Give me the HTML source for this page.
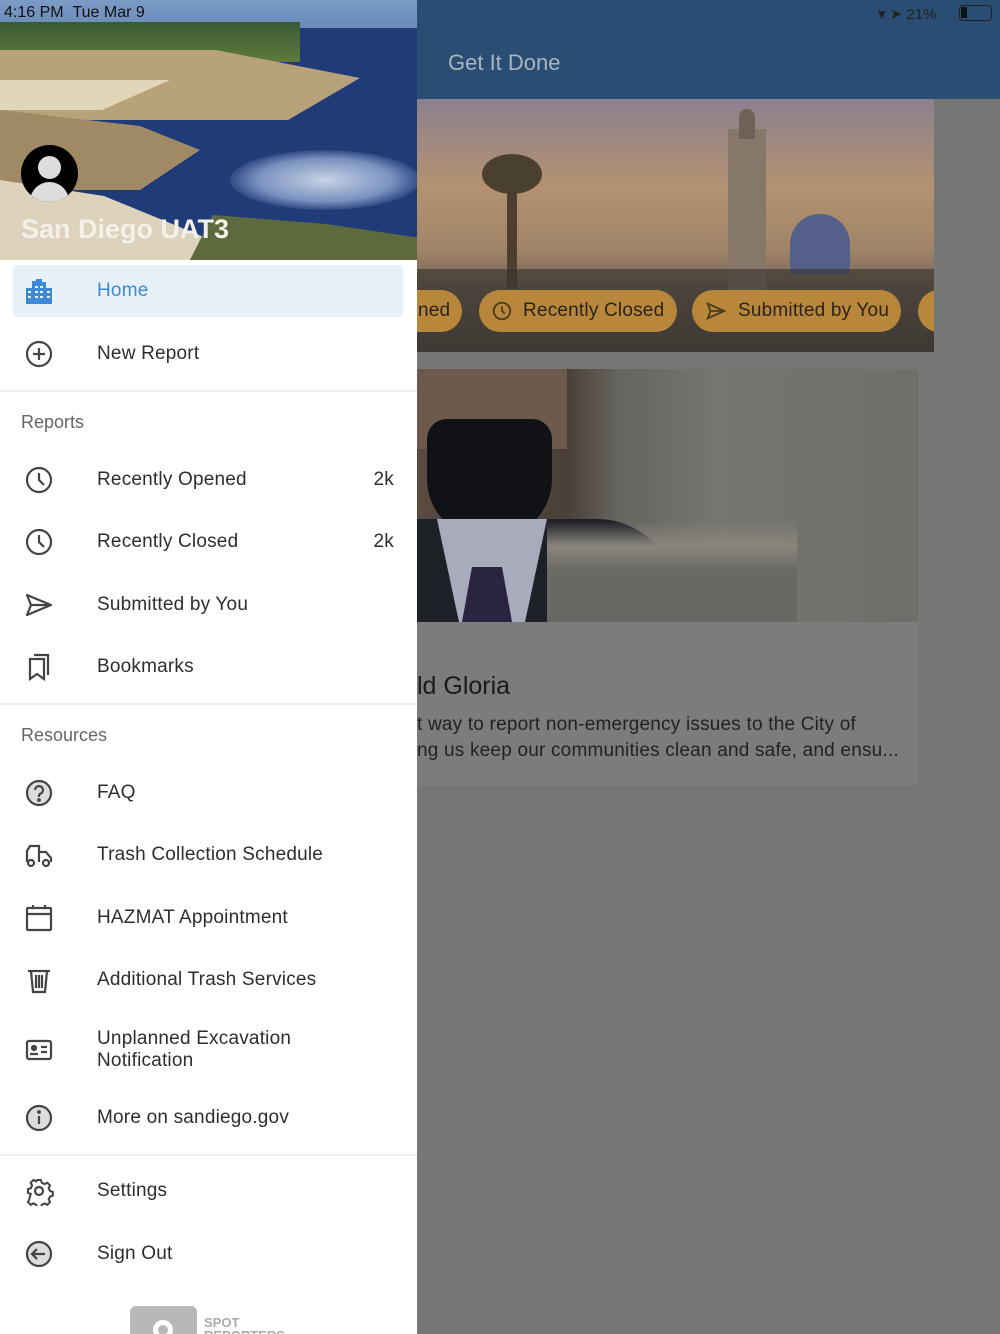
<!DOCTYPE html>
<html style="width:1000px;height:1334px;overflow:hidden"><head><meta charset="utf-8">
<style>
*{margin:0;padding:0;box-sizing:border-box}
body{width:1000px;height:1334px;overflow:hidden;font-family:"Liberation Sans",sans-serif;background:#767676;position:relative}
.abs{position:absolute}
.drawer{left:0;top:0;width:417px;height:1334px;background:#fff}
.item{position:absolute;left:0;width:417px;height:62px;display:flex;align-items:center;font-size:19px;color:#2e2e2e;letter-spacing:.2px}
.item svg{position:absolute;left:24px;width:30px;height:30px}
.item span{position:absolute;left:97px}
.item .n{left:auto;right:23px}
.sec{position:absolute;left:21px;font-size:18px;color:#666}
.div{position:absolute;left:0;width:417px;height:2px;background:#eee}
.chip{position:absolute;top:191px;height:42px;border-radius:21px;background:#b8873c;color:#2a2418;font-size:19px;display:flex;align-items:center;letter-spacing:.2px}
</style></head><body>
<!-- right side (dimmed) -->
<div class="abs" style="left:417px;top:0;width:583px;height:99px;background:#2a4e73"></div>
<div class="abs" style="left:448px;top:50px;font-size:22px;color:#a9b3be">Get It Done</div>
<div class="abs" style="left:878px;top:5px;font-size:15px;color:#222">▾ ➤ 21%</div>
<div class="abs" style="left:959px;top:5px;width:33px;height:16px;border:1.5px solid #222;border-radius:4px"><div style="width:6px;height:11px;background:#111;margin:1px"></div></div>
<div class="abs" style="left:417px;top:99px;width:517px;height:253px;overflow:hidden;background:linear-gradient(180deg,#8c8090 0,#b49270 35%,#a08468 60%,#6a5f52 75%,#4a4440 100%)">
 <div class="abs" style="left:311px;top:30px;width:38px;height:180px;background:#857868"></div>
 <div class="abs" style="left:322px;top:10px;width:16px;height:30px;border-radius:8px 8px 0 0;background:#6e6256"></div>
 <div class="abs" style="left:373px;top:115px;width:60px;height:60px;border-radius:30px 30px 0 0;background:#54608a"></div>
 <div class="abs" style="left:90px;top:80px;width:10px;height:110px;background:#4e3e30"></div>
 <div class="abs" style="left:65px;top:55px;width:60px;height:40px;border-radius:50%;background:#4a4030"></div>
 <div class="abs" style="left:0;top:170px;width:517px;height:83px;background:rgba(55,50,45,.6)"></div>
 <div class="chip" style="left:-20px;width:65px"><span style="margin-left:21px">ned</span></div>
 <div class="chip" style="left:62px;width:198px"><svg style="margin-left:12px" width="22" height="22" viewBox="0 0 24 24" fill="none" stroke="#4a3a20" stroke-width="2"><circle cx="12" cy="12" r="9"/><path d="M12 7v5l3 3"/></svg><span style="margin-left:10px">Recently Closed</span></div>
 <div class="chip" style="left:275px;width:209px"><svg style="margin-left:12px" width="24" height="22" viewBox="0 0 24 24" fill="none" stroke="#4a3a20" stroke-width="2"><path d="M3 4l18 8-18 8 3-8z M6 12h15"/></svg><span style="margin-left:10px">Submitted by You</span></div>
 <div class="chip" style="left:501px;width:60px"></div>
</div>
<div class="abs" style="left:417px;top:369px;width:501px;height:417px;background:#7c7c7c;border-radius:0 5px 5px 0"></div>
<div class="abs" style="left:417px;top:369px;width:501px;height:253px;overflow:hidden;border-radius:0 5px 0 0;background:linear-gradient(90deg,#5a4a40 0,#4a4038 30%,#66645e 40%,#77756f 60%,#6e6e6a 100%)">
 <div class="abs" style="left:0;top:0;width:150px;height:80px;background:#6e5a4c"></div>
 <div class="abs" style="left:10px;top:50px;width:125px;height:120px;border-radius:20px 20px 60px 60px;background:#101216"></div>
 <div class="abs" style="left:0;top:150px;width:260px;height:103px;background:#1e2028;border-radius:0 80px 0 0"></div>
 <div class="abs" style="left:20px;top:150px;width:110px;height:103px;background:#a7abbc;clip-path:polygon(0 0,100% 0,80% 100%,20% 100%)"></div>
 <div class="abs" style="left:45px;top:198px;width:50px;height:55px;background:#2a2440;clip-path:polygon(20% 0,80% 0,100% 100%,0 100%)"></div>
 <div class="abs" style="left:130px;top:0;width:250px;height:253px;background:linear-gradient(180deg,transparent 60%,#8a867e 70%,#6a6864 80%)"></div>
</div>
<div class="abs" style="left:417px;top:672px;font-size:25px;color:#1a1a1a">ld Gloria</div>
<div class="abs" style="left:417px;top:712px;font-size:19px;color:#222;line-height:26px;letter-spacing:.2px">t way to report non-emergency issues to the City of<br>ng us keep our communities clean and safe, and ensu...</div>

<!-- drawer -->
<div class="abs drawer"></div>
<div class="abs" style="left:0;top:0;width:417px;height:260px;overflow:hidden;background:#1f3c78">
 <div class="abs" style="left:0;top:0;width:417px;height:28px;background:linear-gradient(180deg,#7c9cc8,#6a8ab8)"></div>
 <div class="abs" style="left:0;top:22px;width:300px;height:40px;background:linear-gradient(180deg,#3a5a34,#5e7a3e)"></div>
 <div class="abs" style="left:0;top:50px;width:360px;height:70px;background:#b8a27a;clip-path:polygon(0 0,60% 0,100% 40%,80% 100%,0 100%)"></div>
 <div class="abs" style="left:0;top:80px;width:170px;height:30px;background:#e2d6b8;clip-path:polygon(0 0,100% 0,60% 100%,0 100%)"></div>
 <div class="abs" style="left:0;top:110px;width:200px;height:80px;background:#a08a66;clip-path:polygon(0 0,70% 20%,100% 50%,70% 100%,0 100%)"></div>
 <div class="abs" style="left:230px;top:150px;width:190px;height:60px;border-radius:50%;background:radial-gradient(ellipse,#c8d2e4 0,#7a92c0 50%,transparent 75%)"></div>
 <div class="abs" style="left:0;top:180px;width:260px;height:80px;background:#ddd2bc;clip-path:polygon(0 0,40% 20%,100% 100%,0 100%)"></div>
 <div class="abs" style="left:190px;top:215px;width:227px;height:45px;background:#5e6a3e;clip-path:polygon(10% 0,60% 20%,100% 50%,100% 100%,0 100%)"></div>
</div>
<div class="abs" style="left:4px;top:4px;font-size:16px;color:#111">4:16 PM &nbsp;Tue Mar 9</div>
<div class="abs" style="left:21px;top:145px;width:57px;height:57px;border-radius:50%;background:#000;overflow:hidden">
<div class="abs" style="left:17px;top:11px;width:23px;height:23px;border-radius:50%;background:#ddd"></div>
<div class="abs" style="left:9px;top:37px;width:39px;height:24px;border-radius:20px 20px 0 0;background:#ddd"></div></div>
<div class="abs" style="left:21px;top:214px;font-size:27px;font-weight:bold;color:#f4f0ea">San Diego UAT3</div>

<div class="abs" style="left:13px;top:265px;width:390px;height:52px;background:#e8f1f9;border-radius:4px"></div>
<div class="item" style="top:260px;color:#3d8ad6"><svg viewBox="0 0 30 30" fill="#3d8ad6"><path d="M2 12h6V5h4V3h6v3h4v6h6v16H2z"/><g fill="#e8f1f9"><rect x="4" y="15" width="3" height="2"/><rect x="4" y="20" width="3" height="2"/><rect x="11" y="10" width="3" height="2"/><rect x="16" y="10" width="3" height="2"/><rect x="11" y="15" width="3" height="2"/><rect x="16" y="15" width="3" height="2"/><rect x="11" y="20" width="3" height="2"/><rect x="16" y="20" width="3" height="2"/><rect x="23" y="15" width="3" height="2"/><rect x="23" y="20" width="3" height="2"/></g></svg><span>Home</span></div>
<div class="item" style="top:323px"><svg viewBox="0 0 30 30" fill="none" stroke="#444" stroke-width="2.2"><circle cx="15" cy="15" r="12"/><path d="M15 9v12M9 15h12"/></svg><span>New Report</span></div>
<div class="div" style="top:390px"></div>
<div class="sec" style="top:412px">Reports</div>
<div class="item" style="top:449px"><svg viewBox="0 0 30 30" fill="none" stroke="#444" stroke-width="2.2"><circle cx="15" cy="15" r="12"/><path d="M15 8v7l5 5"/></svg><span>Recently Opened</span><span class="n">2k</span></div>
<div class="item" style="top:511px"><svg viewBox="0 0 30 30" fill="none" stroke="#444" stroke-width="2.2"><circle cx="15" cy="15" r="12"/><path d="M15 8v7l5 5"/></svg><span>Recently Closed</span><span class="n">2k</span></div>
<div class="item" style="top:574px"><svg viewBox="0 0 30 30" fill="none" stroke="#444" stroke-width="2.2" stroke-linejoin="round"><path d="M3 5l24 10-24 10 4-10z M7 15h20"/></svg><span>Submitted by You</span></div>
<div class="item" style="top:636px"><svg viewBox="0 0 30 30" fill="none" stroke="#444" stroke-width="2.2"><path d="M6 7h14v20l-7-5-7 5z M10 3h14v20"/></svg><span>Bookmarks</span></div>
<div class="div" style="top:703px"></div>
<div class="sec" style="top:725px">Resources</div>
<div class="item" style="top:762px"><svg viewBox="0 0 30 30" fill="none" stroke="#444" stroke-width="2.2"><circle cx="15" cy="15" r="12" fill="#ddd"/><path d="M11 12a4 4 0 1 1 5 4c-1 .5-1 1-1 3"/><circle cx="15" cy="22" r=".8" fill="#444"/></svg><span>FAQ</span></div>
<div class="item" style="top:824px"><svg viewBox="0 0 30 30" fill="none" stroke="#444" stroke-width="2.2"><path d="M3 22V11l3-5h9v16M15 12h7l5 6v4"/><circle cx="7" cy="23" r="3" fill="#fff"/><circle cx="22" cy="23" r="3" fill="#fff"/></svg><span>Trash Collection Schedule</span></div>
<div class="item" style="top:887px"><svg viewBox="0 0 30 30" fill="none" stroke="#444" stroke-width="2.2"><rect x="3" y="5" width="24" height="22" rx="1"/><path d="M3 11h24M9 2v4M21 2v4"/></svg><span>HAZMAT Appointment</span></div>
<div class="item" style="top:949px"><svg viewBox="0 0 30 30" fill="none" stroke="#444" stroke-width="2.2"><path d="M4 6h22M7 6l2 21h12l2-21M12 10v13M15 10v13M18 10v13"/></svg><span>Additional Trash Services</span></div>
<div class="item" style="top:1019px;height:62px"><svg viewBox="0 0 30 30" fill="none" stroke="#444" stroke-width="2.2"><rect x="3" y="6" width="24" height="18" rx="2"/><circle cx="10" cy="13" r="2" fill="#444"/><path d="M6 19h8M17 12h6M17 17h6"/></svg><span style="line-height:22px">Unplanned Excavation<br>Notification</span></div>
<div class="item" style="top:1087px"><svg viewBox="0 0 30 30" fill="none" stroke="#444" stroke-width="2.2"><circle cx="15" cy="15" r="12" fill="#ddd"/><path d="M15 13v8"/><circle cx="15" cy="9" r=".8" fill="#444"/></svg><span>More on sandiego.gov</span></div>
<div class="div" style="top:1154px"></div>
<div class="item" style="top:1160px"><svg viewBox="0 0 30 30" fill="none" stroke="#444" stroke-width="2.2"><path d="M13 3h4l1 3 3 1.5 3-1.5 3 3-1.5 3 1.5 3 3 1v4l-3 1-1.5 3 1.5 3-3 3-3-1.5-3 1.5-1 3h-4l-1-3-3-1.5-3 1.5-3-3 1.5-3L6 18l-3-1v-4l3-1 1.5-3L6 6l3-3 3 1.5z" transform="scale(.92) translate(1.3 1.3)"/><circle cx="15" cy="15" r="4"/></svg><span>Settings</span></div>
<div class="item" style="top:1223px"><svg viewBox="0 0 30 30" fill="none" stroke="#444" stroke-width="2.2"><circle cx="15" cy="15" r="12" fill="#ddd"/><path d="M21 15H9M13 10l-5 5 5 5"/></svg><span>Sign Out</span></div>
<div class="abs" style="left:130px;top:1306px;width:67px;height:28px;border-radius:6px 6px 0 0;background:#b8b8b8;overflow:hidden"><div class="abs" style="left:23px;top:14px;width:20px;height:20px;border-radius:50%;border:5px solid #fff"></div></div>
<div class="abs" style="left:204px;top:1315px;font-size:13px;font-weight:bold;color:#aaa">SPOT</div>
<div class="abs" style="left:204px;top:1329px;height:5px;overflow:hidden;font-size:13px;font-weight:bold;color:#aaa;line-height:13px">REPORTERS</div>
</body></html>
